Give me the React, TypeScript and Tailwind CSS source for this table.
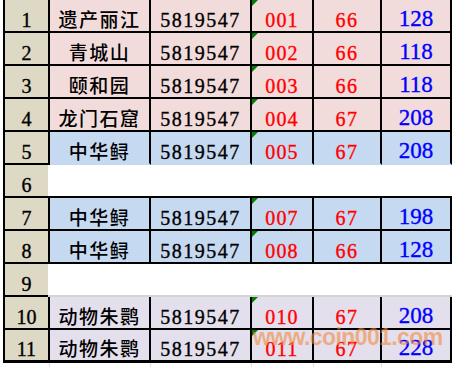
import React from "react"

type Row = {
  n: number
  name?: string
  code?: string
  id?: string
  a?: string
  b?: string
  bg?: string
  bottom?: string
}

const rows: Row[] = [
  { n: 1, name: "遗产丽江", code: "5819547", id: "001", a: "66", b: "128", bg: "bg-[#f2dcdb]", bottom: "border-b-2 border-black" },
  { n: 2, name: "青城山", code: "5819547", id: "002", a: "66", b: "118", bg: "bg-[#f2dcdb]", bottom: "border-b-2 border-black" },
  { n: 3, name: "颐和园", code: "5819547", id: "003", a: "66", b: "118", bg: "bg-[#f2dcdb]", bottom: "border-b-2 border-black" },
  { n: 4, name: "龙门石窟", code: "5819547", id: "004", a: "67", b: "208", bg: "bg-[#f2dcdb]", bottom: "border-b-2 border-black" },
  { n: 5, name: "中华鲟", code: "5819547", id: "005", a: "67", b: "208", bg: "bg-[#c5d9f1]", bottom: "border-b-2 border-transparent" },
  { n: 6, bottom: "border-b-2 border-black" },
  { n: 7, name: "中华鲟", code: "5819547", id: "007", a: "67", b: "198", bg: "bg-[#c5d9f1]", bottom: "border-b-2 border-black" },
  { n: 8, name: "中华鲟", code: "5819547", id: "008", a: "66", b: "128", bg: "bg-[#c5d9f1]", bottom: "border-b-2 border-black" },
  { n: 9, bottom: "border-b-2 border-[#d4d4d4]" },
  { n: 10, name: "动物朱鹮", code: "5819547", id: "010", a: "67", b: "208", bg: "bg-[#e4dfec]", bottom: "border-b-2 border-black" },
  { n: 11, name: "动物朱鹮", code: "5819547", id: "011", a: "67", b: "228", bg: "bg-[#e4dfec]", bottom: "border-b-[3px] border-black" },
]

// heavier strokes like the Excel rendering
const serif = "font-['Liberation_Serif',serif] [-webkit-text-stroke:0.35px_currentColor]"
const cjk = "font-['Noto_Sans_CJK_SC',sans-serif] font-medium"

function TableRow({ row }: { row: Row }) {
  const isLast = row.n === 11
  const numBottom = isLast ? "border-b-[3px]" : "border-b-2"

  // empty rows: only the number cell has a fill
  if (!row.name) {
    return (
      <div className="flex h-[33px]">
        <div
          className={`w-[45px] border-l-2 border-b-2 border-black bg-[#ddd9c4] flex items-end justify-center pb-[1px] text-[20px] leading-none text-black ${serif}`}
        >
          {row.n}
        </div>
        <div className={`w-[404px] bg-white ${row.bottom}`} />
      </div>
    )
  }

  return (
    <div className="flex h-[33px]">
      <div
        className={`w-[47px] border-l-2 border-r-2 ${numBottom} border-black bg-[#ddd9c4] flex items-end justify-center pb-[1px] text-[20px] leading-none text-black ${serif}`}
      >
        {row.n}
      </div>
      <div
        className={`w-[101px] border-r-2 border-r-black ${row.bottom} ${row.bg} flex items-end justify-center pb-[3px] text-[19px] leading-none tracking-[1.5px] text-black ${cjk}`}
      >
        {row.name}
      </div>
      <div
        className={`w-[101px] border-r-2 border-r-black ${row.bottom} ${row.bg} flex items-end justify-center pb-[1px] text-[20px] leading-none tracking-[1.5px] text-black ${serif}`}
      >
        {row.code}
      </div>
      <div
        className={`relative w-[62px] border-r-2 border-r-black ${row.bottom} ${row.bg} flex items-end justify-center pb-[1px] text-[20px] leading-none tracking-[1.2px] text-[#ff0000] ${serif}`}
      >
        <span className="absolute left-0 top-0 w-0 h-0 border-t-[6px] border-t-[#008000] border-r-[6px] border-r-transparent [-webkit-text-stroke:0]" />
        {row.id}
      </div>
      <div
        className={`w-[68px] border-r-2 border-r-black ${row.bottom} ${row.bg} flex items-end justify-center pb-[1px] text-[20px] leading-none tracking-[1.5px] text-[#ff0000] ${serif}`}
      >
        {row.a}
      </div>
      <div
        className={`w-[70px] border-r-2 border-r-black ${row.bottom} ${row.bg} flex items-end justify-center pb-[1px] text-[23px] leading-none text-[#0000ff] ${serif}`}
      >
        {row.b}
      </div>
    </div>
  )
}

export default function App() {
  return (
    <div className="relative w-[454px] h-[367px] bg-white overflow-hidden">
      <div className="pl-[3px]">
        {rows.map((r) => (
          <TableRow key={r.n} row={r} />
        ))}
        {/* faint grid below the sheet */}
        <div className="flex h-[6px]">
          <div className="w-[47px] border-r border-[#e0e0e0]" />
          <div className="w-[101px] border-r border-[#e0e0e0]" />
          <div className="w-[101px] border-r border-[#e0e0e0]" />
          <div className="w-[62px] border-r border-[#e0e0e0]" />
          <div className="w-[68px] border-r border-[#e0e0e0]" />
        </div>
      </div>

      {/* watermark */}
      <div className="absolute left-[253px] top-[326px] text-[23px] font-bold leading-none tracking-[-0.6px] text-[#f08a3c]/60 font-['Liberation_Sans',Arial,sans-serif] pointer-events-none">
        www.coin001.com
      </div>
    </div>
  )
}
